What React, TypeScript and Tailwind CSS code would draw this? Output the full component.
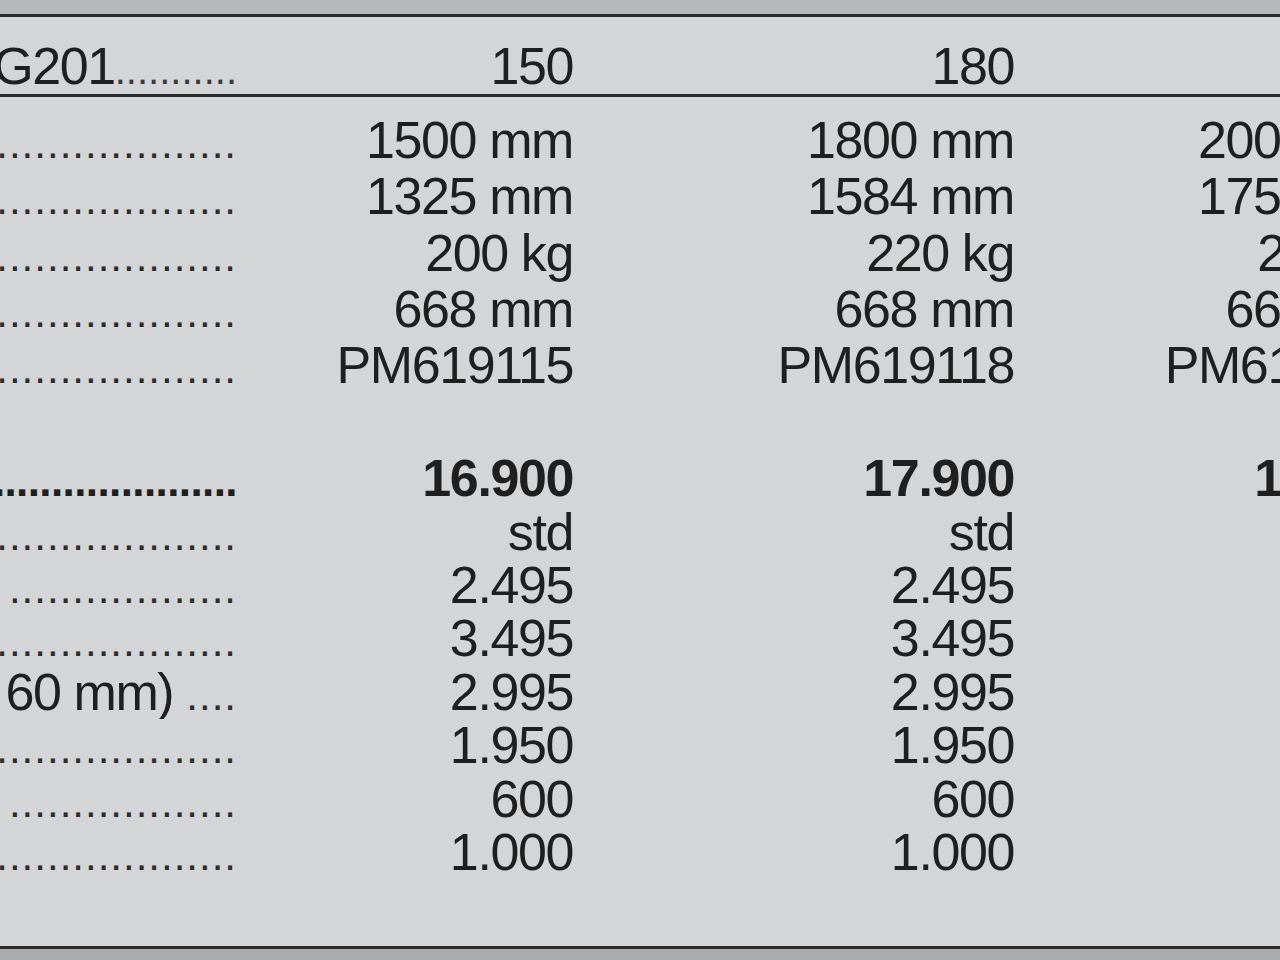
const dots = (n: number) => ".".repeat(n);

type Row = { label: string; n: number; values: string[]; bold?: boolean };

const specRows: Row[] = [
  { label: "Arbejdsbredde ", n: 19, values: ["1500 mm", "1800 mm", "2000 mm"] },
  { label: "Fejebredde ved 30° ", n: 19, values: ["1325 mm", "1584 mm", "1750 mm"] },
  { label: "Vægt ", n: 19, values: ["200 kg", "220 kg", "240 kg"] },
  { label: "Børstediameter ", n: 19, values: ["668 mm", "668 mm", "668 mm"] },
  { label: "Varenr. ", n: 19, values: ["PM619115", "PM619118", "PM619120"] },
];

const priceRows: Row[] = [
  { label: "Pris excl. moms ", n: 21, values: ["16.900", "17.900", "19.900"], bold: true },
  { label: "Hydraulisk drejning ", n: 19, values: ["std", "std", "std"] },
  { label: "Opsamler\u00a0\u00a0", n: 18, values: ["2.495", "2.495", "2.495"] },
  { label: "Vandsprinkler ", n: 19, values: ["3.495", "3.495", "3.495"] },
  { label: "Støttehjul (Ø 60 mm) ", n: 4, values: ["2.995", "2.995", "2.995"] },
  { label: "Euro-beslag ", n: 19, values: ["1.950", "1.950", "1.950"] },
  { label: "Skraber\u00a0\u00a0", n: 18, values: ["600", "600", "600"] },
  { label: "Hydraulik ventil ", n: 19, values: ["1.000", "1.000", "1.000"] },
];

function TableRow({ row, leading }: { row: Row; leading: string }) {
  return (
    <div className={`flex ${leading} ${row.bold ? "font-bold" : ""}`}>
      <div className="w-[237px] shrink-0 overflow-hidden whitespace-nowrap flex justify-end">
        <span className="shrink-0">
          {row.label}
          <span
            className={
              row.bold
                ? "leading-[0] text-[44px] tracking-[-0.6px]"
                : "leading-[0] text-[42px] tracking-[1px] text-[#2c2c2c]"
            }
          >
            {dots(row.n)}
          </span>
        </span>
      </div>
      <div className="w-[336px] shrink-0 text-right whitespace-nowrap">{row.values[0]}</div>
      <div className="w-[441px] shrink-0 text-right whitespace-nowrap">{row.values[1]}</div>
      <div className="w-[391px] shrink-0 text-right whitespace-nowrap">{row.values[2]}</div>
    </div>
  );
}

export default function App() {
  return (
    <div className="w-[1280px] h-[960px] overflow-hidden bg-[#d3d5d7] text-[#1f1f1f] font-['Liberation_Sans',Arial,sans-serif] text-[52px] tracking-[-1.4px] flex flex-col">
      {/* top band */}
      <div className="h-[14px] shrink-0 bg-[#b6b9bc]" />
      <div className="h-[3px] shrink-0 bg-[#2a2a2a]" />

      {/* header */}
      <div className="h-[77px] shrink-0 pt-[21px]">
        <div className="flex leading-[56px]">
          <div className="w-[237px] shrink-0 overflow-hidden whitespace-nowrap flex justify-end">
            <span className="shrink-0">
              Model XG201
              <span className="leading-[0] text-[40px] tracking-[0px] text-[#3a3a3a]">{dots(11)}</span>
            </span>
          </div>
          <div className="w-[336px] shrink-0 text-right">150</div>
          <div className="w-[441px] shrink-0 text-right">180</div>
          <div className="w-[391px] shrink-0 text-right">200</div>
        </div>
      </div>
      <div className="h-[3px] shrink-0 bg-[#2a2a2a]" />

      {/* body */}
      <div className="flex-1 pt-[15px]">
        {specRows.map((r, i) => (
          <TableRow key={i} row={r} leading="leading-[56.25px]" />
        ))}
        <div className="h-[59px]" />
        {priceRows.map((r, i) => (
          <TableRow key={i} row={r} leading="leading-[53.4px]" />
        ))}
      </div>

      {/* bottom rule */}
      <div className="h-[3px] shrink-0 bg-[#2a2a2a]" />
      <div className="h-[11px] shrink-0 bg-[#a9acaf]" />
    </div>
  );
}
